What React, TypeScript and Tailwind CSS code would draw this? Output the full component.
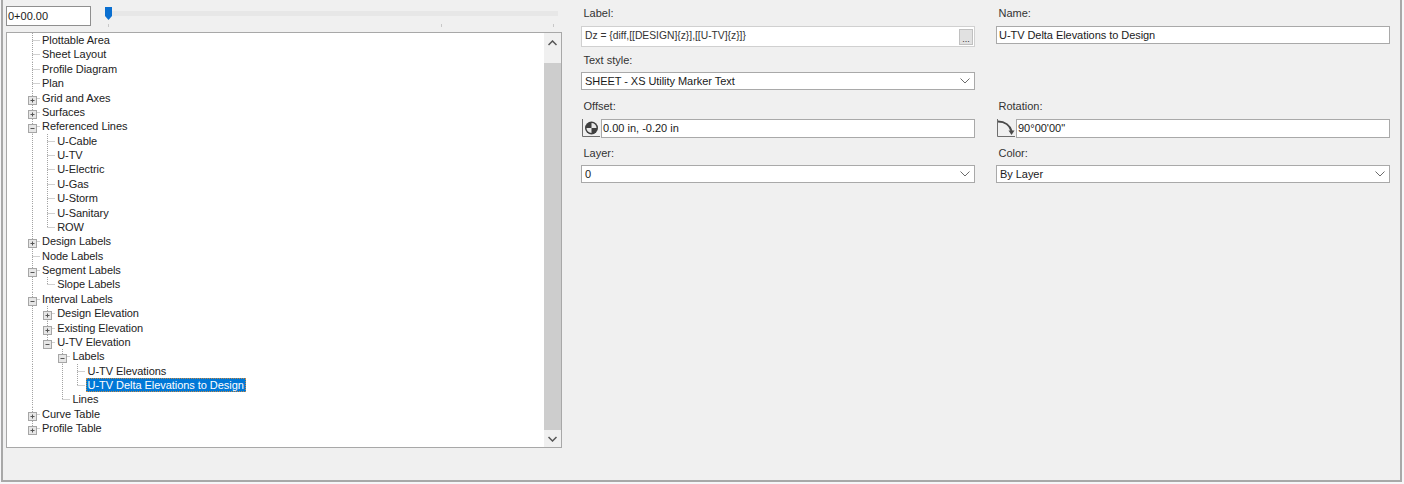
import { Fragment } from "react";

type Row = { text: string; depth: number; kind?: "plus" | "minus"; selected?: boolean };

const rows: Row[] = [
  { text: "Plottable Area", depth: 0 },
  { text: "Sheet Layout", depth: 0 },
  { text: "Profile Diagram", depth: 0 },
  { text: "Plan", depth: 0 },
  { text: "Grid and Axes", depth: 0, kind: "plus" },
  { text: "Surfaces", depth: 0, kind: "plus" },
  { text: "Referenced Lines", depth: 0, kind: "minus" },
  { text: "U-Cable", depth: 1 },
  { text: "U-TV", depth: 1 },
  { text: "U-Electric", depth: 1 },
  { text: "U-Gas", depth: 1 },
  { text: "U-Storm", depth: 1 },
  { text: "U-Sanitary", depth: 1 },
  { text: "ROW", depth: 1 },
  { text: "Design Labels", depth: 0, kind: "plus" },
  { text: "Node Labels", depth: 0 },
  { text: "Segment Labels", depth: 0, kind: "minus" },
  { text: "Slope Labels", depth: 1 },
  { text: "Interval Labels", depth: 0, kind: "minus" },
  { text: "Design Elevation", depth: 1, kind: "plus" },
  { text: "Existing Elevation", depth: 1, kind: "plus" },
  { text: "U-TV Elevation", depth: 1, kind: "minus" },
  { text: "Labels", depth: 2, kind: "minus" },
  { text: "U-TV Elevations", depth: 3 },
  { text: "U-TV Delta Elevations to Design", depth: 3, selected: true },
  { text: "Lines", depth: 2 },
  { text: "Curve Table", depth: 0, kind: "plus" },
  { text: "Profile Table", depth: 0, kind: "plus" },
];

// does the guide at this depth carry on below row i
function continues(i: number, depth: number) {
  for (let j = i + 1; j < rows.length; j++) {
    if (rows[j].depth < depth) return false;
    if (rows[j].depth === depth) return true;
  }
  return false;
}

const dot = "#a3a3a3";

function Guides({ index, row }: { index: number; row: Row }) {
  const x = (d: number) => 4.5 + d * 15;
  const h = 14.38;
  const cx = x(row.depth);
  const cy = 7;
  const ancestors = [];
  for (let d = 0; d < row.depth; d++) {
    if (continues(index, d)) ancestors.push(d);
  }
  return (
    <svg width="100" height="15" className="absolute left-0 top-0 overflow-visible">
      {ancestors.map((d) => (
        <line key={d} x1={x(d)} x2={x(d)} y1={0} y2={h} stroke={dot} strokeDasharray="1 1" />
      ))}
      <line x1={cx} x2={cx} y1={0} y2={continues(index, row.depth) ? h : cy} stroke={dot} strokeDasharray="1 1" />
      <line x1={cx} x2={cx + 8} y1={cy + 0.5} y2={cy + 0.5} stroke={dot} strokeDasharray="1 1" />
      {row.kind && (
        <Fragment>
          <rect x={cx - 4} y={cy - 1.5} width={8} height={8} fill="#e6e6e6" stroke="#a6a6a6" />
          <line x1={cx - 2} x2={cx + 2} y1={cy + 2.5} y2={cy + 2.5} stroke="#555" />
          {row.kind === "plus" && <line x1={cx} x2={cx} y1={cy + 0.5} y2={cy + 4.5} stroke="#555" />}
        </Fragment>
      )}
    </svg>
  );
}

function Chevron() {
  return (
    <svg width="10" height="6" viewBox="0 0 10 6" fill="none" stroke="#6b6b6b" strokeWidth="1">
      <path d="M0.5 0.5 L5 5 L9.5 0.5" />
    </svg>
  );
}

function Select({ value }: { value: string }) {
  return (
    <div className="flex h-[18px] items-center justify-between border border-[#a9a9a9] bg-white pl-[3px] pr-[4px] text-[11px] leading-none tracking-[-0.05px] text-[#1a1a1a]">
      <span>{value}</span>
      <Chevron />
    </div>
  );
}

function Field({ label, children }: { label: string; children: React.ReactNode }) {
  return (
    <div className="flex flex-col">
      <div className="h-[14px] pl-[2.5px] text-[11px] leading-[14px] text-[#333]">{label}</div>
      {children}
    </div>
  );
}

function OffsetIcon() {
  return (
    <svg width="19" height="19" viewBox="0 0 19 19" className="shrink-0">
      <path d="M1.5 0 V17.5 H19" fill="none" stroke="#6e6e6e" />
      <circle cx="10.5" cy="9" r="6.5" fill="#3f3f3f" />
      <path d="M10.5 9 V4 A5 5 0 0 1 15.5 9 Z M10.5 9 V14 A5 5 0 0 1 5.5 9 Z" fill="#e8e8e8" />
    </svg>
  );
}

function RotationIcon() {
  return (
    <svg width="19" height="19" viewBox="0 0 19 19" className="shrink-0">
      <path d="M1.5 0 V17.5 H19" fill="none" stroke="#6e6e6e" />
      <path d="M2 2.5 C9 2.5 14 6.5 15.5 12" fill="none" stroke="#4a4a4a" strokeWidth="2" />
      <path d="M12.5 11.5 H18.5 L15.5 16 Z" fill="#4a4a4a" />
    </svg>
  );
}

function TextInput({ value }: { value: string }) {
  return (
    <div className="flex h-[19px] flex-1 items-center border border-[#a9a9a9] bg-white pl-[1px] text-[11px] leading-none text-[#1a1a1a]">
      {value}
    </div>
  );
}

export default function App() {
  return (
    <div className="h-[484px] w-[1404px] overflow-hidden bg-[#f6f6f8] font-['Liberation_Sans',Arial,sans-serif]">
      <div className="ml-[1px] flex h-[482px] w-[1401px] border-x-2 border-b-2 border-[#a8a8a8] bg-[#f0f0f0]">
        {/* left side: slider + tree */}
        <div className="ml-[3px] flex w-[556px] shrink-0 flex-col">
          <div className="flex h-[32px] shrink-0 items-start pt-[6px]">
            <div className="flex h-[20px] w-[85px] items-center border border-[#8f8f8f] bg-white pl-[1px] text-[11px] leading-none text-[#1a1a1a]">
              0+00.00
            </div>
            <div className="relative ml-[14px] mt-[5px] h-[5px] w-[453px] bg-[#e7e7e7]">
              <div className="absolute left-0 top-[-4px] h-[13px] w-[7px] bg-[#0a6fd0] [clip-path:polygon(0_0,100%_0,100%_70%,50%_100%,0_70%)]" />
              <div className="absolute left-[3px] top-[13px] h-[3px] w-px bg-[#c8c8c8]" />
              <div className="absolute left-[336px] top-[13px] h-[3px] w-px bg-[#c8c8c8]" />
              <div className="absolute left-[448px] top-[13px] h-[3px] w-px bg-[#c8c8c8]" />
            </div>
          </div>
          <div className="flex h-[416px] border border-[#a8a8a8] bg-white">
            <div className="flex-1">
              {rows.map((row, i) => (
                <div key={row.text} className="relative h-[14.38px] pl-[35px] text-[11px] leading-[14px] tracking-[-0.05px] text-[#222]">
                  <div className="absolute left-[21px] top-0">
                    <Guides index={i} row={row} />
                  </div>
                  <span
                    style={{ marginLeft: row.depth * 15.2 - (row.selected ? 2 : 0) }}
                    className={row.selected ? "relative inline-block h-[14px] border border-dotted border-[#c58a45] bg-[#0078d7] px-px leading-[12px] text-white" : "relative inline-block"}
                  >
                    {row.text}
                  </span>
                </div>
              ))}
            </div>
            <div className="flex w-[17px] flex-col items-center bg-[#f0f0f0]">
              <div className="flex h-[30px] w-full items-start justify-center pt-[7px]">
                <svg width="9" height="6" viewBox="0 0 9 6" fill="none" stroke="#555" strokeWidth="1.5">
                  <path d="M0.5 5 L4.5 1 L8.5 5" />
                </svg>
              </div>
              <div className="h-[367px] w-full bg-[#cdcdcd]" />
              <div className="flex flex-1 items-center justify-center">
                <svg width="9" height="6" viewBox="0 0 9 6" fill="none" stroke="#555" strokeWidth="1.5">
                  <path d="M0.5 1 L4.5 5 L8.5 1" />
                </svg>
              </div>
            </div>
          </div>
        </div>

        {/* right side: properties */}
        <div className="ml-[19px] grid h-fit grid-cols-[394px_394px] gap-x-[21px] pt-[6px]">
          <div className="flex flex-col">
            <Field label="Label:">
              <div className="mt-[6px] flex h-[21px] items-center justify-between border border-[#d0d0d0] bg-white pl-[3px] pr-[1px] text-[10.3px] leading-none text-[#333]">
                <span>Dz = {"{diff,[[DESIGN]{z}],[[U-TV]{z}]}"}</span>
                <div className="flex h-[16px] w-[14px] items-end justify-center border border-[#c0c0c0] bg-[#e1e1e1] pb-[2px] text-[9px] leading-[6px] text-[#333]">
                  ...
                </div>
              </div>
            </Field>
            <div className="mt-[6px]">
              <Field label="Text style:">
                <div className="mt-[5px]">
                  <Select value="SHEET - XS Utility Marker Text" />
                </div>
              </Field>
            </div>
            <div className="mt-[9px]">
              <Field label="Offset:">
                <div className="mt-[6px] flex h-[19px] gap-[1px]">
                  <OffsetIcon />
                  <TextInput value="0.00 in, -0.20 in" />
                </div>
              </Field>
            </div>
            <div className="mt-[8px]">
              <Field label="Layer:">
                <div className="mt-[5px]">
                  <Select value="0" />
                </div>
              </Field>
            </div>
          </div>
          <div className="flex flex-col">
            <Field label="Name:">
              <div className="mt-[6px] flex h-[18px] items-center border border-[#a9a9a9] bg-white pl-[2px] text-[11px] leading-none tracking-[-0.05px] text-[#1a1a1a]">
                U-TV Delta Elevations to Design
              </div>
            </Field>
            <div className="mt-[55px]">
              <Field label="Rotation:">
                <div className="mt-[6px] flex h-[19px] gap-[1px]">
                  <RotationIcon />
                  <TextInput value={"90°00'00\""} />
                </div>
              </Field>
            </div>
            <div className="mt-[8px]">
              <Field label="Color:">
                <div className="mt-[5px]">
                  <Select value="By Layer" />
                </div>
              </Field>
            </div>
          </div>
        </div>
      </div>
    </div>
  );
}
